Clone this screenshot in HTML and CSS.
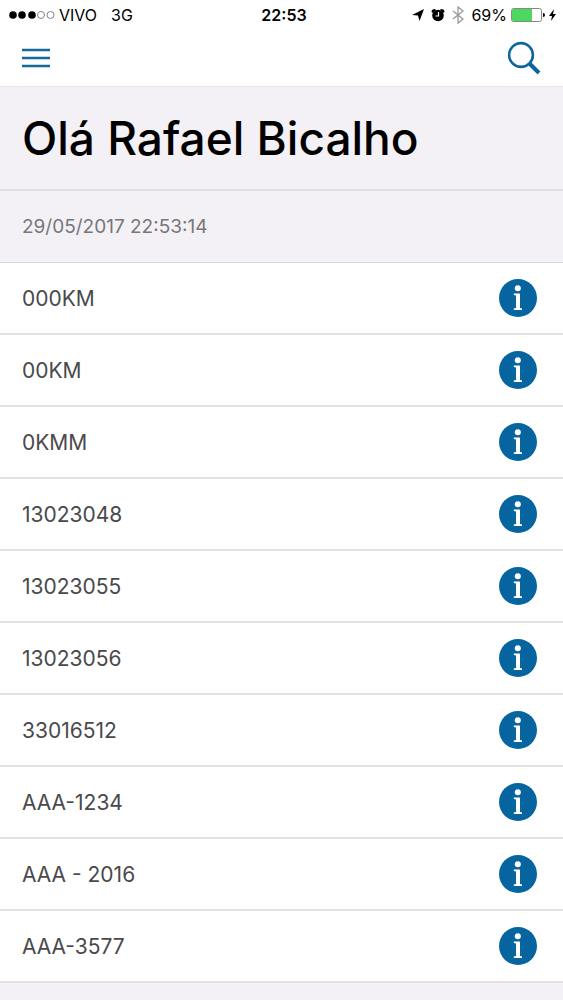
FILE: index.html
```html
<!DOCTYPE html>
<html lang="pt-BR">
  <head>
    <meta charset="UTF-8" />
    <meta name="viewport" content="width=device-width, initial-scale=1.0" />
    <title>Olá Rafael Bicalho</title>
    <link rel="stylesheet" href="styles.css">
  </head>
  <body>
    <div class="statusBar">
      <div class="carrier">
        <svg class="signal" width="47" height="10" viewBox="0 0 47 10">
          <circle cx="5" cy="5" r="3.8" />
          <circle cx="14" cy="5" r="3.8" />
          <circle cx="24" cy="5" r="3.8" />
          <circle class="empty" cx="33" cy="5" r="3.5" />
          <circle class="empty" cx="42.5" cy="5" r="3.5" />
        </svg>
        <span>VIVO</span>
        <span class="network">3G</span>
      </div>
      <div class="clock">22:53</div>
      <div class="indicators">
        <svg width="12" height="12" viewBox="0 0 12 12">
          <path d="M12 0 L7.5 12 L6 6.5 L0 6 Z" />
        </svg>
        <svg width="14" height="14" viewBox="0 0 14 14">
          <circle cx="7" cy="7.5" r="5.8" />
          <path d="M0.5 4 Q0.5 1 4 1 L5 2 L2 5 Z M13.5 4 Q13.5 1 10 1 L9 2 L12 5 Z" />
          <path d="M7.5 4 V8 H4.5" fill="none" stroke="#fff" stroke-width="1.2" />
        </svg>
        <svg width="12" height="18" viewBox="0 0 12 18">
          <path d="M1 5 L11 13 L6 17 V1 L11 5 L1 13" fill="none" stroke="#999" stroke-width="1.3" />
        </svg>
        <span class="percent">69%</span>
        <svg width="34" height="14" viewBox="0 0 34 14">
          <rect x="0.5" y="0.5" width="30" height="13" rx="2" fill="#fff" stroke="#888" />
          <path d="M1 1 H21 V13 H1 Z" fill="#4cd75f" />
          <path d="M32 5 Q34 5 34 7 Q34 9 32 9 Z" />
        </svg>
        <svg width="7" height="12" viewBox="0 0 7 12">
          <path d="M5 0 L0 7 H3 L2 12 L7 5 H4 Z" />
        </svg>
      </div>
    </div>
    <header class="navBar">
      <button type="button" aria-label="Menu">
        <svg width="28" height="20" viewBox="0 0 28 20">
          <path d="M0 2 H28 M0 10 H28 M0 18 H28" fill="none" stroke="#17699a" stroke-width="2.6" />
        </svg>
      </button>
      <button type="button" aria-label="Buscar">
        <svg width="34" height="34" viewBox="0 0 34 34">
          <circle cx="14" cy="14" r="11.9" fill="none" stroke="#0f669c" stroke-width="2.6" />
          <path d="M22.5 22.5 L32 32" fill="none" stroke="#0f669c" stroke-width="4" />
        </svg>
      </button>
    </header>
    <main>
      <h1>Olá Rafael Bicalho</h1>
      <p class="date">29/05/2017 22:53:14</p>
      <ul id="list" class="list"></ul>
    </main>
    <script>
      const items = [
        "000KM",
        "00KM",
        "0KMM",
        "13023048",
        "13023055",
        "13023056",
        "33016512",
        "AAA-1234",
        "AAA - 2016",
        "AAA-3577",
      ];
      const infoIcon =
        '<svg width="38" height="38" viewBox="0 0 38 38">' +
        '<circle cx="19" cy="19" r="19" fill="#06649e" />' +
        '<circle cx="18.8" cy="9.3" r="3" fill="#fff" />' +
        '<path d="M14.8 14.5 H21 V29 L23 29.5 V31 H14.8 V29.5 L17 29 V16.5 L14.8 16 Z" fill="#fff" />' +
        "</svg>";

      const list = document.getElementById("list");
      for (let i = 0; i < items.length; i++) {
        const li = document.createElement("li");
        const name = document.createElement("span");
        const btn = document.createElement("button");
        name.textContent = items[i];
        btn.type = "button";
        btn.setAttribute("aria-label", "Detalhes de " + items[i]);
        btn.innerHTML = infoIcon;
        li.appendChild(name);
        li.appendChild(btn);
        list.appendChild(li);
      }
    </script>
  </body>
</html>
```
FILE: styles.css
```css
* {
  box-sizing: border-box;
}
body {
  margin: 0;
  min-height: 100vh;
  background-color: #f3f1f5;
  color: #000;
  font-family: Inter, "Liberation Sans", sans-serif;
}
svg {
  display: block;
}
button {
  padding: 0;
  border: 0;
  background: none;
  cursor: pointer;
}
.statusBar {
  display: grid;
  grid-template-columns: 1fr auto 1fr;
  align-items: center;
  height: 29px;
  padding: 0 7px 0 8px;
  background-color: #fff;
  font-size: 16px;
}
.carrier,
.indicators {
  display: flex;
  align-items: center;
}
.carrier {
  gap: 4px;
}
.indicators {
  justify-content: flex-end;
  gap: 7px;
}
.percent,
.indicators svg:nth-last-child(2) {
  margin-right: -3px;
}
.signal .empty {
  fill: none;
  stroke: #888;
}
.network {
  margin-left: 10px;
}
.clock {
  padding-left: 4px;
  font-weight: 600;
}
.navBar {
  display: flex;
  justify-content: space-between;
  align-items: center;
  height: 58px;
  padding: 0 22px;
  background-color: #fff;
  border-bottom: 1px solid #e6e6e8;
}
h1 {
  margin: 0;
  padding: 22px 22px;
  border-bottom: 2px solid #e0dfe2;
  font-size: 46px;
  font-weight: 500;
  line-height: 58px;
}
.date {
  margin: 0;
  padding: 1px 22px 0;
  border-bottom: 1px solid #d6d5d9;
  color: #77767a;
  font-size: 19px;
  line-height: 70px;
}
.list {
  margin: 0;
  padding: 0;
  list-style: none;
}
.list li {
  display: flex;
  justify-content: space-between;
  align-items: center;
  height: 72px;
  padding: 0 26px 0 22px;
  background-color: #fff;
  border-bottom: 2px solid #e2e1e4;
  color: #4a494c;
  font-size: 21px;
}
```
